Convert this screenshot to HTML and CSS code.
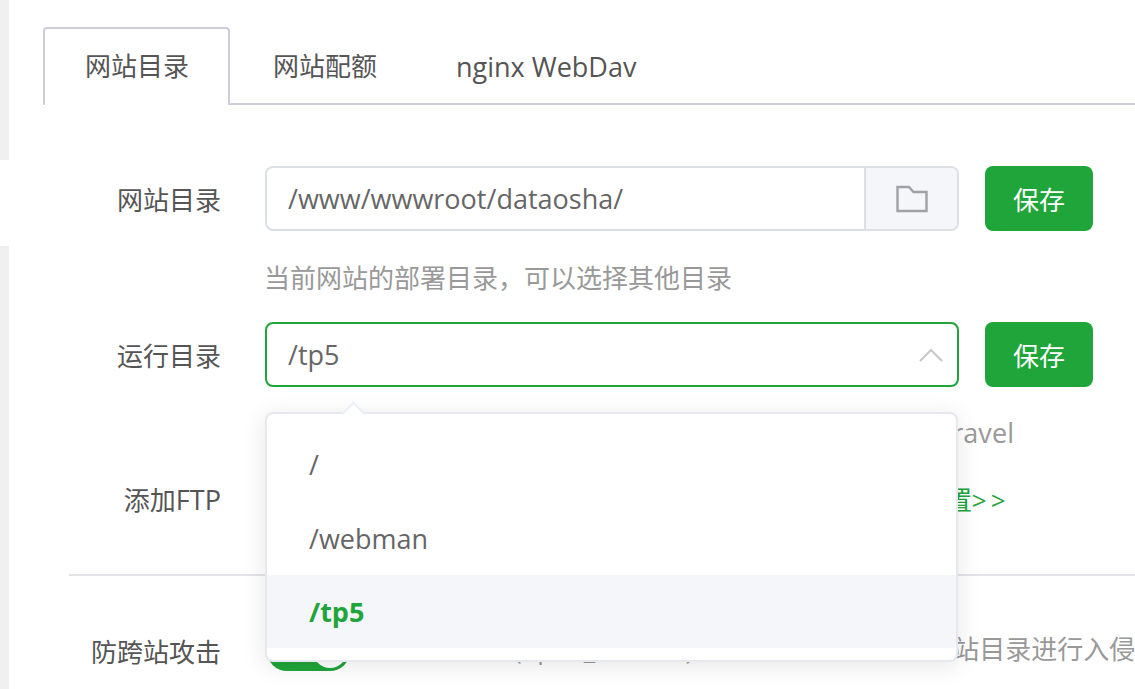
FILE: index.html
```html
<!DOCTYPE html>
<html lang="zh-CN">
<head>
<meta charset="utf-8">
<title>网站目录</title>
<link rel="stylesheet" href="styles.css">
</head>
<body>
<div class="shell">
  <div class="rail"><div class="rail-top"></div><div class="rail-gap"></div><div class="rail-bottom"></div></div>
  <main class="main">
    <div class="tabs">
      <div class="tab active">网站目录</div>
      <div class="tab">网站配额</div>
      <div class="tab tab-latin">nginx WebDav</div>
    </div>
    <section class="form">
      <div class="row">
        <div class="label">网站目录</div>
        <div class="control group">
          <div class="value">/www/wwwroot/dataosha/</div>
          <div class="addon">
            <svg class="folder" width="32" height="28" viewBox="0 0 32 28"><path d="M1.5 2h11.5l4.5 5h13v19h-29z" fill="none" stroke="#a0a1a6" stroke-width="2.4"/></svg>
          </div>
        </div>
        <button class="save">保存</button>
      </div>
      <div class="hint hint-first">当前网站的部署目录，可以选择其他目录</div>
      <div class="row">
        <div class="label">运行目录</div>
        <div class="control focus">
          <div class="value">/tp5</div>
          <svg class="caret" width="24" height="14" viewBox="0 0 24 14"><path d="M1 13L12 2l11 11" fill="none" stroke="#c6c7c9" stroke-width="2"/></svg>
        </div>
        <button class="save">保存</button>
      </div>
      <div class="hint hint-second">部分程序需要指定二级目录作为运行目录如<span class="latin">ThinkPHP5，Laravel</span></div>
      <div class="row row-ftp">
        <div class="label label-ftp">添加<span class="latin">FTP</span></div>
        <div class="ftp-link">当前网站未创建FTP，可前往FTP管理页面进行快速添加和设置<span class="chevrons">&gt;&gt;</span></div>
      </div>
      <div class="divider"></div>
      <div class="row row-switch">
        <div class="label">防跨站攻击</div>
        <div class="switch"><span class="knob"></span></div>
        <div class="switch-text">防跨站攻击(open_basedir)，防止黑客通过其他网站目录进行入侵，保护网站安全</div>
      </div>
    </section>
  </main>
</div>
<div class="popup">
  <span class="arrow"></span>
  <div class="option">/</div>
  <div class="option">/webman</div>
  <div class="option selected">/tp5</div>
</div>
</body>
</html>
```
FILE: styles.css
```css
* { box-sizing: border-box; }
html, body { margin: 0; height: 100%; overflow: hidden; background: #fff; }
body {
  font-family: "Open Sans", "Noto Sans CJK SC", sans-serif;
  font-size: 26px;
  color: #666;
  position: relative;
}
.shell { display: flex; width: 1135px; height: 689px; overflow: hidden; }
.rail { width: 9px; flex: none; display: flex; flex-direction: column; }
.rail-top { height: 160px; background: #f0f0f0; }
.rail-gap { height: 86px; background: #fff; }
.rail-bottom { flex: 1; background: #f0f0f0; }
.main { flex: 1; min-width: 0; padding: 27px 0 0 34px; }
.tabs { display: flex; height: 78px; border-bottom: 2px solid #cdcddb; }
.tab {
  height: 78px;
  line-height: 75px;
  padding: 0 40px;
  color: #555;
  white-space: nowrap;
  border-radius: 4px 4px 0 0;
  border: 2px solid transparent;
  border-bottom: 0;
}
.tab:nth-child(2) { padding: 0 37px 0 41px; }
.tab:nth-child(3) { padding: 0 38px; font-size: 27px; }
.tab.active { border-color: #cdcddb; background: #fff; width: 187px; }
.form { padding: 61px 0 0 26px; }
.row { display: flex; align-items: center; height: 65px; }
.label { width: 152px; margin-right: 44px; text-align: right; color: #555; flex: none; white-space: nowrap; }
.label-ftp { padding-bottom: 3px; }
.control {
  width: 694px;
  height: 65px;
  flex: none;
  display: flex;
  align-items: center;
  border: 2px solid #dcdfe6;
  border-radius: 8px;
  background: #fff;
  overflow: hidden;
}
.control.focus { border-color: #20a53a; }
.value { flex: 1; padding-left: 21px; color: #666; font-size: 27px; white-space: nowrap; }
.addon {
  width: 93px;
  height: 100%;
  flex: none;
  background: #f5f6fa;
  border-left: 2px solid #dcdfe6;
  display: flex;
  align-items: center;
  justify-content: center;
}
.caret { margin-right: 14px; flex: none; }
.save {
  width: 108px;
  height: 65px;
  margin-left: 26px;
  flex: none;
  font: inherit;
  color: #fff;
  background: #20a53a;
  border: 0;
  border-radius: 8px;
  padding: 0;
}
.latin { font-size: 27px; letter-spacing: .1px; }
.hint { margin-left: 195px; color: #999; white-space: nowrap; height: 38px; line-height: 38px; }
.hint-first { margin-top: 28px; margin-bottom: 25px; }
.hint-second { margin-top: 27px; margin-bottom: 16px; }
.ftp-link { color: #20a53a; white-space: nowrap; padding-bottom: 3px; margin-left: 2px; letter-spacing: -.2px; }
.chevrons { letter-spacing: 4px; }
.divider { height: 2px; background: #e2e4ea; margin-top: 41px; }
.row-switch { margin-top: 42px; height: 65px; }
.switch {
  width: 83px;
  height: 40px;
  margin-left: 2px;
  flex: none;
  border-radius: 20px;
  background: #20a53a;
  position: relative;
}
.knob { position: absolute; right: 3px; top: 3px; width: 34px; height: 34px; border-radius: 50%; background: #fff; }
.switch-text { margin-left: 34px; color: #999; white-space: nowrap; position: relative; top: -3px; }
.popup {
  position: absolute;
  left: 265px;
  top: 412px;
  width: 693px;
  height: 250px;
  padding-top: 13px;
  background: #fff;
  border: 2px solid #e6e8ee;
  border-radius: 8px;
  box-shadow: 0 4px 24px rgba(0, 0, 0, .1);
}
.arrow {
  position: absolute;
  left: 78px;
  top: -9px;
  width: 17px;
  height: 17px;
  background: #fff;
  border-top: 2px solid #ebeef5;
  border-left: 2px solid #ebeef5;
  transform: rotate(45deg);
}
.option { height: 74px; line-height: 75px; padding: 0 42px; color: #666; font-size: 27px; }
.option.selected { color: #20a53a; font-weight: 700; background: #f5f6fa; height: 73px; line-height: 74px; }
```
